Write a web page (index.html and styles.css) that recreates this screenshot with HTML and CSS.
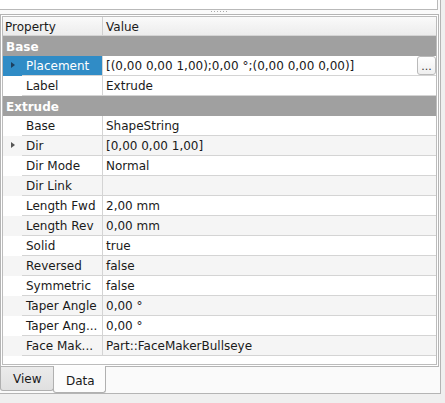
FILE: index.html
```html
<!DOCTYPE html>
<html>
<head>
<meta charset="utf-8">
<link rel="stylesheet" href="styles.css">
</head>
<body>
<div class="app">
  <div class="tree"></div>
  <div class="splitter"><span class="grip"></span></div>
  <div class="pane">
    <div class="table">
      <div class="header">
        <div class="h-name">Property</div>
        <div class="h-value">Value</div>
      </div>
      <div class="group">Base</div>
      <div class="row selected">
        <div class="ind"><span class="arrow"></span></div>
        <div class="name">Placement</div>
        <div class="value">[(0,00 0,00 1,00);0,00 °;(0,00 0,00 0,00)]<span class="dots">...</span></div>
      </div>
      <div class="row"><div class="ind"></div><div class="name">Label</div><div class="value">Extrude</div></div>
      <div class="group">Extrude</div>
      <div class="row"><div class="ind"></div><div class="name">Base</div><div class="value">ShapeString</div></div>
      <div class="row alt"><div class="ind"><span class="arrow"></span></div><div class="name">Dir</div><div class="value">[0,00 0,00 1,00]</div></div>
      <div class="row"><div class="ind"></div><div class="name">Dir Mode</div><div class="value">Normal</div></div>
      <div class="row alt"><div class="ind"></div><div class="name">Dir Link</div><div class="value"></div></div>
      <div class="row"><div class="ind"></div><div class="name">Length Fwd</div><div class="value">2,00 mm</div></div>
      <div class="row alt"><div class="ind"></div><div class="name">Length Rev</div><div class="value">0,00 mm</div></div>
      <div class="row"><div class="ind"></div><div class="name">Solid</div><div class="value">true</div></div>
      <div class="row alt"><div class="ind"></div><div class="name">Reversed</div><div class="value">false</div></div>
      <div class="row"><div class="ind"></div><div class="name">Symmetric</div><div class="value">false</div></div>
      <div class="row alt"><div class="ind"></div><div class="name">Taper Angle</div><div class="value">0,00 °</div></div>
      <div class="row"><div class="ind"></div><div class="name">Taper Ang...</div><div class="value">0,00 °</div></div>
      <div class="row alt"><div class="ind"></div><div class="name">Face Mak...</div><div class="value">Part::FaceMakerBullseye</div></div>
    </div>
  </div>
  <div class="tabs">
    <div class="tab">View</div>
    <div class="tab active">Data</div>
  </div>
</div>
</body>
</html>
```

FILE: styles.css
```css
* { box-sizing: border-box; }
html, body {
  margin: 0;
  padding: 0;
  background: #efefef;
  width: 445px;
  height: 403px;
  overflow: hidden;
  font-family: "DejaVu Sans", sans-serif;
  font-size: 12px;
  color: #1a1a1a;
}
.app {
  width: 441px;
  height: 394px;
  background: #fafafa;
  border-right: 1px solid #b4b4b4;
  border-bottom: 1px solid #b4b4b4;
}
.tree {
  width: 438px;
  height: 10px;
  background: #fff;
  border-right: 1px solid #b9b9b9;
  border-bottom: 1px solid #b9b9b9;
}
.splitter {
  height: 4px;
  display: flex;
  justify-content: center;
}
.grip {
  margin-top: 1px;
  margin-left: -2px;
  width: 17px;
  height: 1px;
  background: repeating-linear-gradient(90deg, #a8a8a8 0 1px, transparent 1px 3px);
}
.pane {
  width: 439px;
  height: 353px;
  border: 1px solid #b4b4b4;
  padding: 1px;
  background: #fff;
}
.table {
  width: 435px;
  height: 349px;
  border: 1px solid #bcbcbc;
  background: #fff;
}
.header {
  display: flex;
  height: 19px;
  background: linear-gradient(#fafafa, #ececec);
  border-bottom: 1px solid #d4d4d4;
  line-height: 21px;
  overflow: hidden;
}
.h-name {
  width: 100px;
  padding-left: 2px;
  border-right: 1px solid #d0d0d0;
}
.h-value {
  padding-left: 3px;
}
.group {
  height: 20px;
  line-height: 22px;
  overflow: hidden;
  background: #a0a0a0;
  color: #fff;
  font-weight: bold;
  padding-left: 3px;
}
.row {
  display: flex;
  height: 20px;
  line-height: 21px;
  background: #fff;
}
.row.alt { background: #f5f5f5; }
.ind {
  width: 19px;
  position: relative;
}
.arrow {
  position: absolute;
  left: 8px;
  top: 6px;
  width: 0;
  height: 0;
  border-top: 3.5px solid transparent;
  border-bottom: 3.5px solid transparent;
  border-left: 4px solid #555;
}
.name {
  width: 81px;
  height: 20px;
  padding-left: 4px;
  border-right: 1px solid #d4d4d4;
  border-bottom: 1px solid #d4d4d4;
  white-space: nowrap;
  overflow: hidden;
}
.value {
  flex: 1;
  height: 20px;
  padding-left: 3px;
  border-bottom: 1px solid #d4d4d4;
  position: relative;
  white-space: nowrap;
}
.row.selected .ind,
.row.selected .name {
  background: #308cc6;
  color: #fff;
}
.row.selected .value { background: #fff; }
.row.selected .arrow { border-left-color: #1d3f5e; }
.dots {
  position: absolute;
  right: 0;
  top: 0;
  width: 19px;
  height: 19px;
  border: 1px solid #bababa;
  border-radius: 3px;
  background: linear-gradient(#fefefe, #efefef);
  font-size: 11px;
  line-height: 20px;
  text-align: center;
  color: #333;
  overflow: hidden;
}
.tabs {
  display: flex;
  align-items: flex-start;
  margin-top: -1px;
}
.tab {
  height: 24px;
  margin-top: 1px;
  padding: 0 12px;
  line-height: 25px;
  background: linear-gradient(#ebebeb, #e0e0e0);
  border: 1px solid #b0b0b0;
  border-top: none;
  border-radius: 0 0 3px 3px;
  width: 54px;
  font-size: 12px;
}
.tab.active {
  height: 27px;
  margin-top: 0;
  margin-left: -1px;
  width: 53px;
  background: #fcfcfc;
  line-height: 30px;
  padding-left: 12px;
}
```
